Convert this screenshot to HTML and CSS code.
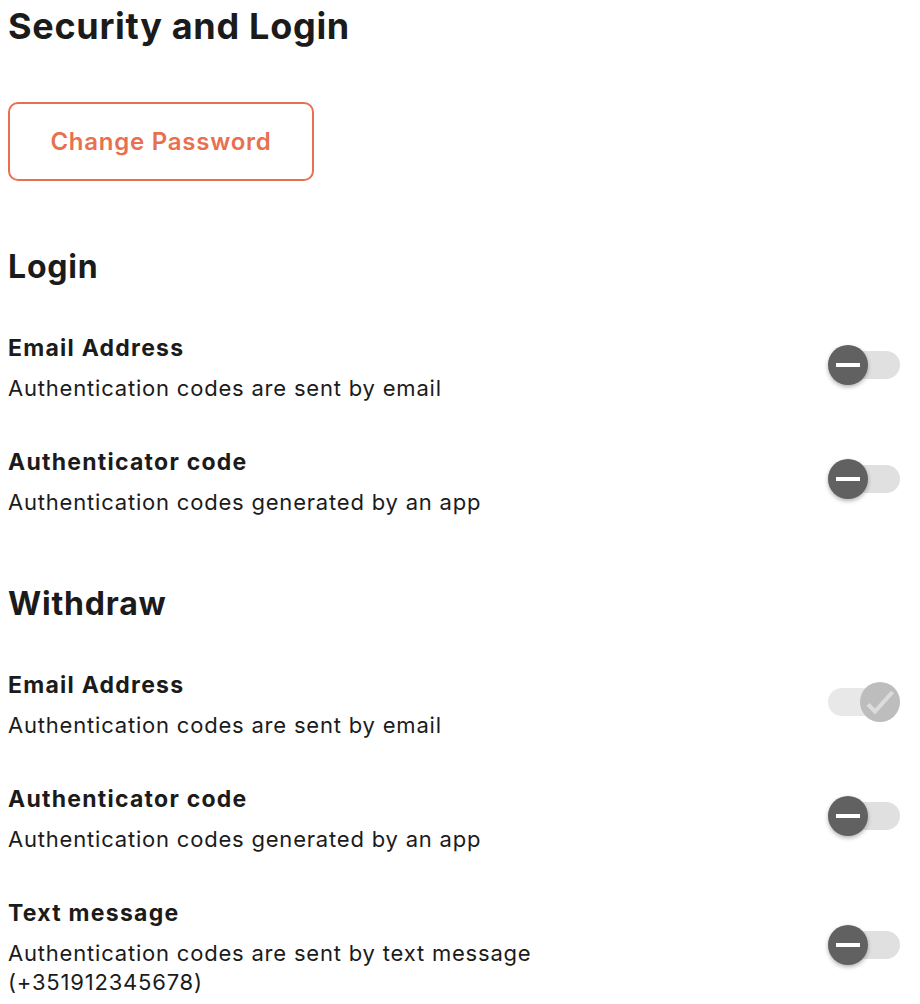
FILE: index.html
```html
<!DOCTYPE html>
<html lang="en">
<head>
<meta charset="utf-8">
<title>Security and Login</title>
<link rel="stylesheet" href="styles.css">
</head>
<body>
<main class="page">
  <h1 class="page-title">Security and Login</h1>
  <button class="btn-outline" type="button">Change Password</button>

  <section class="section section-login">
    <h2 class="section-title">Login</h2>
    <div class="rows">
      <div class="row">
        <div class="row-text">
          <div class="row-title">Email Address</div>
          <div class="row-desc">Authentication codes are sent by email</div>
        </div>
        <span class="toggle"><span class="track"></span><span class="knob"><svg viewBox="0 0 40 40" width="40" height="40"><rect x="8" y="18" width="24" height="4" fill="#fff"/></svg></span></span>
      </div>
      <div class="row">
        <div class="row-text">
          <div class="row-title">Authenticator code</div>
          <div class="row-desc">Authentication codes generated by an app</div>
        </div>
        <span class="toggle"><span class="track"></span><span class="knob"><svg viewBox="0 0 40 40" width="40" height="40"><rect x="8" y="18" width="24" height="4" fill="#fff"/></svg></span></span>
      </div>
    </div>
  </section>

  <section class="section section-withdraw">
    <h2 class="section-title">Withdraw</h2>
    <div class="rows">
      <div class="row">
        <div class="row-text">
          <div class="row-title">Email Address</div>
          <div class="row-desc">Authentication codes are sent by email</div>
        </div>
        <span class="toggle is-on"><span class="track"></span><span class="knob"><svg viewBox="0 0 40 40" width="40" height="40"><path d="M8 22.3 L15 29.5 L32.5 10" fill="none" stroke="#dcdcdc" stroke-width="4" stroke-linecap="butt" stroke-linejoin="miter"/></svg></span></span>
      </div>
      <div class="row">
        <div class="row-text">
          <div class="row-title">Authenticator code</div>
          <div class="row-desc">Authentication codes generated by an app</div>
        </div>
        <span class="toggle"><span class="track"></span><span class="knob"><svg viewBox="0 0 40 40" width="40" height="40"><rect x="8" y="18" width="24" height="4" fill="#fff"/></svg></span></span>
      </div>
      <div class="row">
        <div class="row-text">
          <div class="row-title">Text message</div>
          <div class="row-desc">Authentication codes are sent by text message (+351912345678)</div>
        </div>
        <span class="toggle"><span class="track"></span><span class="knob"><svg viewBox="0 0 40 40" width="40" height="40"><rect x="8" y="18" width="24" height="4" fill="#fff"/></svg></span></span>
      </div>
    </div>
  </section>
</main>
</body>
</html>
```

FILE: styles.css
```css
html, body {
  margin: 0;
  padding: 0;
  background: #ffffff;
}

body {
  font-family: Inter, "Noto Sans", "DejaVu Sans", sans-serif;
  color: #1b1b1b;
}

.page {
  padding: 0 20px 0 8px;
}

.page-title {
  margin: 4px 0 0;
  font-size: 36px;
  line-height: 44px;
  font-weight: 700;
  letter-spacing: 0.7px;
}

.btn-outline {
  display: block;
  margin-top: 54px;
  width: 306px;
  height: 79px;
  box-sizing: border-box;
  border: 2px solid #e9704f;
  border-radius: 10px;
  background: #fff;
  color: #e9704f;
  font-family: inherit;
  font-size: 24px;
  font-weight: 600;
  letter-spacing: 0.75px;
  padding: 0;
  cursor: pointer;
}

.section-login {
  margin-top: 66px;
}

.section-withdraw {
  margin-top: 67px;
}

.section-title {
  margin: 0 0 47px;
  font-size: 32px;
  line-height: 40px;
  font-weight: 700;
  letter-spacing: 0.8px;
}

.rows {
  display: flex;
  flex-direction: column;
  gap: 45px;
}

.row {
  display: flex;
  justify-content: space-between;
  align-items: center;
}

.row-text {
  max-width: 560px;
}

.row-title {
  font-size: 23px;
  line-height: 28px;
  font-weight: 700;
  letter-spacing: 1.25px;
}

.row-desc {
  margin-top: 12px;
  font-size: 22px;
  line-height: 29px;
  font-weight: 400;
  letter-spacing: 0.8px;
}

.toggle {
  position: relative;
  display: block;
  flex: none;
  width: 72px;
  height: 40px;
  margin-bottom: 7px;
}

.track {
  position: absolute;
  left: 0;
  right: 0;
  top: 6px;
  height: 28px;
  border-radius: 14px;
  background: #e0e0e0;
}

.knob {
  position: absolute;
  top: 0;
  left: 0;
  width: 40px;
  height: 40px;
  border-radius: 50%;
  background: #616161;
  box-shadow: 0 2px 4px rgba(0, 0, 0, 0.3);
}

.knob svg {
  display: block;
}

.toggle.is-on .track {
  background: #e8e8e8;
}

.toggle.is-on .knob {
  left: auto;
  right: 0;
  background: #bdbdbd;
  box-shadow: none;
}
```
